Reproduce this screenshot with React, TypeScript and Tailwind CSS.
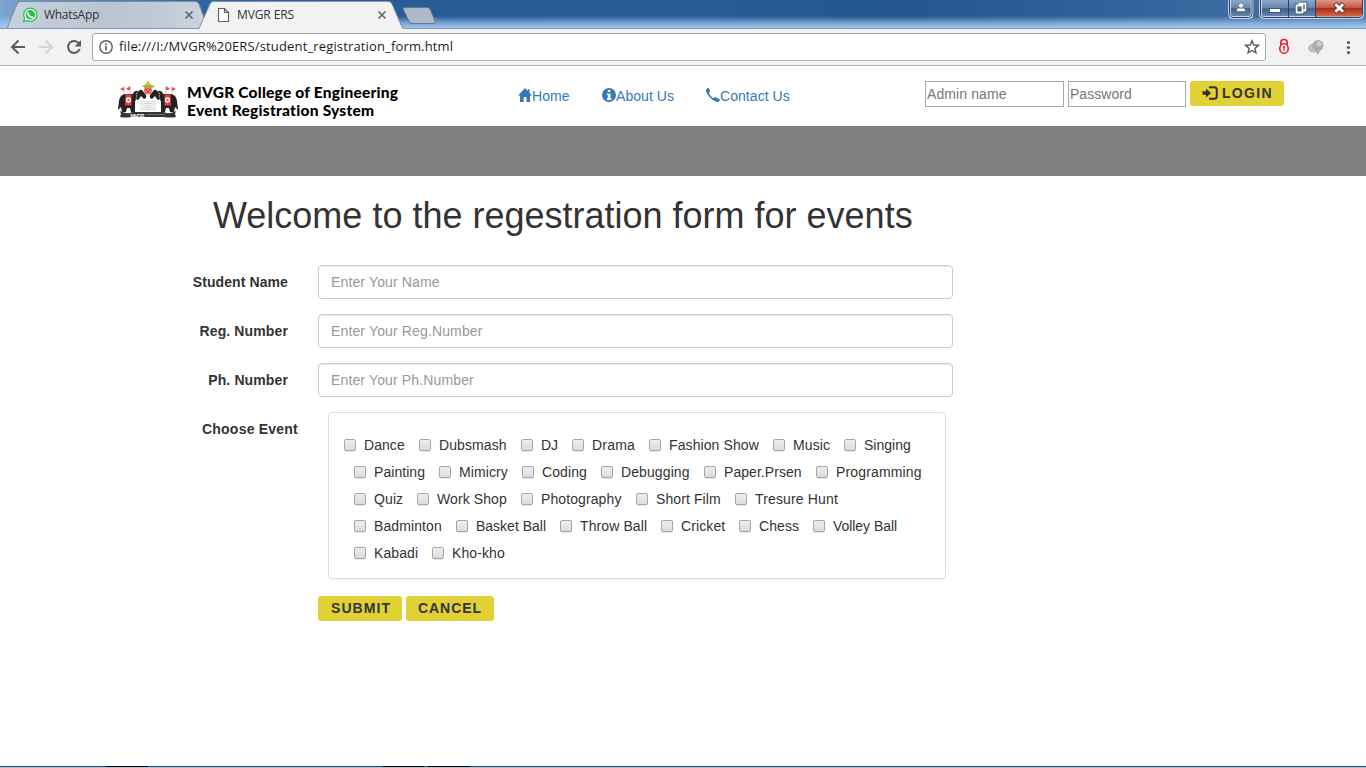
import React from "react";

type Item = [string, string, string];

const rows: Item[][] = [
  [
    ["Dance", "w-[75px]", "tracking-[0.05px]"],
    ["Dubsmash", "w-[102px]", "tracking-[0.1px]"],
    ["DJ", "w-[51px]", "tracking-normal"],
    ["Drama", "w-[77px]", "tracking-[0.2px]"],
    ["Fashion Show", "w-[124px]", "tracking-[0.1px]"],
    ["Music", "w-[71px]", "tracking-[0.1px]"],
    ["Singing", "w-[80px]", "tracking-normal"],
  ],
  [
    ["Painting", "w-[85px]", "tracking-[0.05px]"],
    ["Mimicry", "w-[83px]", "tracking-[0.1px]"],
    ["Coding", "w-[79px]", "tracking-[0.1px]"],
    ["Debugging", "w-[103px]", "tracking-[0.1px]"],
    ["Paper.Prsen", "w-[112px]", "tracking-[0.05px]"],
    ["Programming", "w-[110px]", "tracking-[0.15px]"],
  ],
  [
    ["Quiz", "w-[63px]", "tracking-[0.1px]"],
    ["Work Shop", "w-[104px]", "tracking-[0.1px]"],
    ["Photography", "w-[115px]", "tracking-[0.1px]"],
    ["Short Film", "w-[99px]", "tracking-[0.1px]"],
    ["Tresure Hunt", "w-[110px]", "tracking-[0.15px]"],
  ],
  [
    ["Badminton", "w-[102px]", "tracking-[0.1px]"],
    ["Basket Ball", "w-[104px]", "tracking-normal"],
    ["Throw Ball", "w-[101px]", "tracking-[0.1px]"],
    ["Cricket", "w-[78px]", "tracking-[0.1px]"],
    ["Chess", "w-[74px]", "tracking-[0.1px]"],
    ["Volley Ball", "w-[90px]", "tracking-[-0.05px]"],
  ],
  [
    ["Kabadi", "w-[78px]", "tracking-[0.1px]"],
    ["Kho-kho", "w-[80px]", "tracking-[0.1px]"],
  ],
];

function TabStrip() {
  return (
    <svg className="block h-[29px] w-[1366px] shrink-0" viewBox="0 0 1366 29">
      <defs>
        <linearGradient id="sky" x1="0" x2="1" y1="0" y2="0">
          <stop offset="0" stopColor="#7fa5cd" />
          <stop offset=".02" stopColor="#6f98c5" />
          <stop offset=".15" stopColor="#2f66a3" />
          <stop offset=".32" stopColor="#265b95" />
          <stop offset=".5" stopColor="#275e98" />
          <stop offset=".65" stopColor="#22568d" />
          <stop offset=".85" stopColor="#34659c" />
          <stop offset="1" stopColor="#4a79ac" />
        </linearGradient>
        <linearGradient id="haze" x1="0" x2="0" y1="0" y2="1">
          <stop offset="0" stopColor="#a3c8f0" stopOpacity="0" />
          <stop offset=".55" stopColor="#a3c8f0" stopOpacity="0" />
          <stop offset=".83" stopColor="#a3c8f0" stopOpacity=".75" />
          <stop offset="1" stopColor="#a6cbf0" stopOpacity="1" />
        </linearGradient>
        <linearGradient id="tab" x1="0" x2="1" y1="0" y2="0">
          <stop offset="0" stopColor="#c6d1de" />
          <stop offset=".5" stopColor="#bac4d0" />
          <stop offset=".75" stopColor="#c0c9d4" />
          <stop offset="1" stopColor="#ccd4dd" />
        </linearGradient>
        <linearGradient id="glass" x1="0" x2="0" y1="0" y2="1">
          <stop offset="0" stopColor="#8ba8c8" />
          <stop offset=".45" stopColor="#6587ad" />
          <stop offset=".5" stopColor="#3e5f86" />
          <stop offset="1" stopColor="#6f92b8" />
        </linearGradient>
        <linearGradient id="red" x1="0" x2="0" y1="0" y2="1">
          <stop offset="0" stopColor="#dc9488" />
          <stop offset=".45" stopColor="#c65a47" />
          <stop offset=".5" stopColor="#aa2c14" />
          <stop offset="1" stopColor="#d16a4d" />
        </linearGradient>
      </defs>
      <rect width="1366" height="29" fill="url(#sky)" />
      <rect width="1366" height="29" fill="url(#haze)" />
      <path d="M7 28.5 L17 4 Q18 1.500 20 1.500 H195 Q198 1.500 199 4 L208 28.500Z" fill="url(#tab)" stroke="#7c8da2" />
      <path d="M199 29 L210 4 Q211 1.500 213 1.500 H388 Q391 1.500 392 4 L402 28 L404 29Z" fill="#f2f2f2" />
      <path d="M199 28.500 L210 4 Q211 1.500 213 1.500 H388 Q391 1.500 392 4 L402 27 Q403 28.500 404 28.500" fill="none" stroke="#8094ab" />
      <path d="M0 28.500H199M404 28.500H1366" stroke="#7d9cc0" />
      <path d="M405 7.500H427Q429 7.500 430 9L435 21Q436 23.500 433 23.500H412Q410 23.500 409 21L403 9Q402.500 7.500 405 7.500Z" fill="#aebac8" stroke="#5f7894" />
      <circle cx="30.300" cy="14.800" r="7.300" fill="#2bbd4e" />
      <path d="M22.700 22.300 24.200 17.500 28 21Z" fill="#2bbd4e" />
      <circle cx="30.300" cy="14.800" r="5.400" fill="none" stroke="#fff" strokeWidth="1.200" />
      <path d="m24.500 20.600 1.200-3.300 2.200 2.200Z" fill="#fff" />
      <path d="M28 12.200q-.5 2.300 1.500 4t4 1.100" fill="none" stroke="#fff" strokeWidth="1.800" />
      <path d="m185.500 11.500 7 7m0-7-7 7M378.500 11.500l7 7m0-7-7 7" stroke="#606468" strokeWidth="1.600" />
      <path d="M218.500 8.500h6l4 4v9h-10zM224.500 8.500v4h4" fill="#fff" stroke="#5f6062" strokeWidth="1.200" />
      <path d="M1229.500 0V14q0 3.500 3.500 3.500h15.500q3.500 0 3.500-3.500V0" fill="url(#glass)" stroke="#e3eef9" strokeWidth="2.500" />
      <path d="M1260.500 0V14q0 3.500 3.500 3.500h95q3.500 0 3.500-3.500V0" fill="url(#glass)" stroke="#e3eef9" strokeWidth="2.500" />
      <path d="M1316 0h46v13.500q0 3-3 3h-43z" fill="url(#red)" />
      <path d="M1229.500 0V14q0 3.500 3.500 3.500h15.500q3.500 0 3.500-3.500V0M1260.500 0V14q0 3.500 3.500 3.500h95q3.500 0 3.500-3.500V0M1288.500 0v17M1315.500 0v17" fill="none" stroke="#2c4260" />
      <path d="M1236.500 11.500v-1.500q0-2 2.500-2h4q2.500 0 2.500 2v1.500z" fill="#fff" stroke="#3d526d" strokeWidth=".6" />
      <circle cx="1241" cy="5.500" r="2.500" fill="#fff" stroke="#3d526d" strokeWidth=".6" />
      <rect x="1269.500" y="8.500" width="11" height="4" fill="#fff" stroke="#445872" />
      <path d="M1298.500 3.500h7v7h-2M1296.500 5.500h6v7h-6z" fill="none" stroke="#33475f" strokeWidth="3.400" />
      <path d="M1298.500 3.500h7v7h-2M1296.500 5.500h6v7h-6z" fill="none" stroke="#fff" strokeWidth="1.800" />
      <path d="m1335 3.800 8.500 8.500m0-8.500-8.500 8.500" stroke="#5b3440" strokeWidth="4.800" />
      <path d="m1335.500 4.300 7.500 7.500m0-7.500-7.500 7.500" stroke="#fff" strokeWidth="2.800" />
    </svg>
  );
}

function Emblem() {
  return (
    <svg className="block h-[38px] w-[62px]" viewBox="0 0 62 38">
      <g id="elephant">
        <path d="M2 20Q3 13 9 13H16Q17 9 22 10Q23 8 25 9L29 14Q30 17 27 18L24 15L22 18Q20 20 18 20V31H14L13 27H10L9 31H5L4 26Q2 28 1 29Z" fill="#24211f" />
        <path d="M8.500 13.500h6v11H8Z" fill="#ee3d3d" />
        <circle cx="11.500" cy="19" r="2" fill="#ef6060" stroke="#fff" strokeWidth="1.300" />
        <path d="M7 13V6M13 13V6" stroke="#999" strokeWidth=".6" />
        <path d="M7 6 3 8l4 2ZM13 5 9 8l4 1.500Z" fill="#ee4450" />
        <path d="M21 10q-3 3-1 7" stroke="#aaa" strokeWidth=".8" fill="none" />
        <path d="M19 18q1 4 5 5" stroke="#fff" strokeWidth="1.200" fill="none" />
      </g>
      <use href="#elephant" transform="matrix(-1 0 0 1 62 0)" />
      <circle cx="31" cy="9.500" r="4" fill="#e96c60" />
      <path d="M25 5l3-1 3-4 3 4 4 1-3 2h-7Z" fill="#98b83a" />
      <path d="M28.500 4h5L31 0Z" fill="#efb83c" />
      <path d="M28.500 8.500H30m2 0h1.500m-3.500 2.500h2" stroke="#8e3931" strokeWidth=".8" />
      <path d="m24 20 7 1 7-1v8l-7 1-7-1Z" fill="#f8f8f8" stroke="#c5c5c5" strokeWidth=".7" />
      <path d="M26 22.500h4m-4 2h4m-4 2h4m2-4h4m-4 2h4m-4 2h4M31 21v7" stroke="#c1c1c1" strokeWidth=".6" />
      <path d="M3 30q9 4 12 1h32q4 3 12-1l-1 3 1 3q-7 1-12 0H15Q8 37 3 36l1-3Z" fill="#373433" />
      <text x="13.500" y="36.500" fill="#fff" fontFamily="Liberation Sans" fontSize="5.500" fontWeight="bold" textLength="14">MVGR</text>
      <path d="M29 33.500h19" stroke="#888" strokeWidth=".7" />
    </svg>
  );
}

function Toolbar() {
  return (
    <div className="flex h-[37px] items-center border-b border-[#b6b4b6] bg-[#f2f2f2]">
      <svg className="h-[36px] w-[92px] shrink-0" viewBox="0 29 92 36" fill="none">
        <path d="M25 47H12m6.500-6.500L12 47l6.500 6.500" stroke="#5a5a5a" strokeWidth="2" />
        <path d="M39 47h13m-6.500-6.500L52 47l-6.500 6.500" stroke="#d3d3d3" strokeWidth="2" />
        <path d="M78.800 43.200A6 6 0 1 0 79.700 49" stroke="#5a5a5a" strokeWidth="2" />
        <path d="M81 40v6.500h-6.500z" fill="#5a5a5a" />
      </svg>
      <div className="flex h-7 w-[1174px] shrink-0 items-center rounded-[3px] border border-[#a9a9a9] bg-white">
        <svg className="ml-[5px] h-4 w-4" viewBox="0 0 16 16" fill="none" stroke="#5a5a5a">
          <circle cx="8" cy="8" r="6.200" strokeWidth="1.400" />
          <path d="M8 7v4.500M8 4.300v1.700" strokeWidth="1.600" />
        </svg>
        <span className="ml-[5px] font-['Open_Sans',sans-serif] text-[13px] tracking-[0.15px] whitespace-nowrap text-[#1b1b1b]">file:///I:/MVGR%20ERS/student_registration_form.html</span>
        <svg className="mr-[5px] ml-auto h-4 w-4" viewBox="0 0 16 16" fill="none" stroke="#5a5a5a" strokeWidth="1.400">
          <path d="m8 1.800 1.800 4.200 4.600.4-3.500 3 1.100 4.500L8 11.500l-4 2.400 1.100-4.500-3.500-3 4.600-.4Z" />
        </svg>
      </div>
      <svg className="h-[36px] w-[100px] shrink-0" viewBox="1266 29 100 36">
        <path d="M1280.800 45v-2.500q0-3 3.200-3t3.200 3V45" fill="none" stroke="#ee1525" strokeWidth="1.500" />
        <ellipse cx="1284" cy="48.500" rx="4.200" ry="4.700" fill="#fff" stroke="#ee1525" strokeWidth="1.600" />
        <path d="M1284 46v5M1282.700 47h2.600" stroke="#ee1525" strokeWidth="1.200" />
        <ellipse cx="1313.500" cy="48" rx="5.500" ry="4.500" fill="#bebebe" />
        <path d="m1314 48 4 7 3-7Z" fill="#a5a5a5" />
        <circle cx="1318" cy="45.500" r="5.500" fill="#adadad" />
        <circle cx="1319" cy="44" r="2.500" fill="#cdcdcd" />
        <circle cx="1348.500" cy="42.500" r="1.600" fill="#5a5a5a" />
        <circle cx="1348.500" cy="47.500" r="1.600" fill="#5a5a5a" />
        <circle cx="1348.500" cy="52.500" r="1.600" fill="#5a5a5a" />
      </svg>
    </div>
  );
}

const navIcons = {
  home: "M7 0 0 7.500h2V14h3.700V9h2.800v5H12V7.500h2L11.500 4.800V1.200H9.800v1.800Z",
  info: "M7 0a7 7 0 1 0 0 14A7 7 0 0 0 7 0ZM5.800 2h2.500v2H5.800ZM5 5.500h3.500v4.800h1V12H4.800v-1.700h1V7H5Z",
  phone: "M1.500 0 3 .2l1.200 3.300L2.700 5q1.500 3 4.500 5.200L9 9l4.300 2q.8.500.4 1.500-.8 1.500-2.900 1.500Q7 13 3.500 9T0 2.500Q0 1 1.500 0Z",
};

function NavLink({ icon, label, width }: { icon: string; label: string; width: string }) {
  return (
    <a className={"flex items-center text-[14px] leading-5 text-[#337ab7] " + width}>
      <svg className="-mt-0.5 h-[14px] w-[14px] shrink-0" viewBox="0 0 14 14">
        <path d={icon} fill="currentColor" fillRule="evenodd" />
      </svg>
      <span className="tracking-[0.06px] whitespace-nowrap">{label}</span>
    </a>
  );
}

function Field({ label, hint, spacing }: { label: string; hint: string; spacing: string }) {
  return (
    <div className="mb-[15px] flex h-[34px] items-center">
      <label className={"w-[288px] text-right text-[14px] font-bold whitespace-nowrap " + spacing}>{label}</label>
      <input
        className="ml-[30px] h-[34px] w-[635px] rounded-[4px] border border-[#ccc] bg-white px-3 text-[14px] tracking-[0.14px] shadow-[inset_0_1px_1px_rgba(0,0,0,.075)] placeholder:text-[#999]"
        placeholder={hint}
      />
    </div>
  );
}

export default function App() {
  return (
    <div className="flex h-[768px] w-[1366px] flex-col overflow-hidden bg-white font-['Liberation_Sans',Arial,sans-serif] text-[#333]">
      <div className="relative">
        <TabStrip />
        <span className="absolute top-[7px] left-[44px] font-['Open_Sans',sans-serif] text-[12px] leading-4 tracking-[-0.3px] text-[#333]">WhatsApp</span>
        <span className="absolute top-[7px] left-[237px] font-['Open_Sans',sans-serif] text-[12px] leading-4 tracking-[-0.1px] text-[#333]">MVGR ERS</span>
      </div>
      <Toolbar />
      <header className="flex h-[60px] items-start">
        <div className="mt-[15px] ml-[117px] w-[62px]"><Emblem /></div>
        <div className="mt-[17px] ml-2 w-[331px] font-[Lato,sans-serif] text-[15.500px] leading-[18px] font-black whitespace-nowrap text-black">
          <div className="tracking-[0.22px]">MVGR College of Engineering</div>
          <div className="tracking-[0.25px]">Event Registration System</div>
        </div>
        <nav className="mt-5 flex">
          <NavLink icon={navIcons.home} label="Home" width="w-[84px]" />
          <NavLink icon={navIcons.info} label="About Us" width="w-[104px]" />
          <NavLink icon={navIcons.phone} label="Contact Us" width="w-[219px]" />
        </nav>
        <div className="mt-[15px] flex">
          <input className="h-[26px] w-[139px] border border-[#a9a9a9] px-px text-[14px] tracking-[0.1px] placeholder:text-[#777]" placeholder="Admin name" />
          <input className="ml-1 h-[26px] w-[118px] border border-[#a9a9a9] px-px text-[14px] tracking-[0.03px] placeholder:text-[#777]" placeholder="Password" />
          <button className="ml-1 flex h-[25px] w-[94px] items-center rounded-[3px] bg-[#e1d134] pl-3 text-[14px] font-bold tracking-[1.300px]">
            <svg className="-mt-0.5 mr-1 h-[14px] w-4" viewBox="0 0 16 14">
              <path d="M.5 5.300H4V2.500L9 7l-5 4.500V8.700H.5Z" fill="#333" />
              <path d="M7 1.200h5.200q2.600 0 2.600 2.600v6.400q0 2.600-2.600 2.600H7" fill="none" stroke="#333" strokeWidth="2" />
            </svg>
            LOGIN
          </button>
        </div>
      </header>
      <div className="h-[50px] bg-[#808080]" />
      <main className="flex-1">
        <h1 className="mt-5 ml-[213px] text-[36px] leading-[40px] whitespace-nowrap">Welcome to the regestration form for events</h1>
        <form className="mt-[29px]">
          <Field label="Student Name" hint="Enter Your Name" spacing="tracking-[0.09px]" />
          <Field label="Reg. Number" hint="Enter Your Reg.Number" spacing="tracking-[0.12px]" />
          <Field label="Ph. Number" hint="Enter Your Ph.Number" spacing="tracking-[0.12px]" />
          <div className="flex">
            <div className="w-[298px] pt-[7px] text-right text-[14px] leading-5 font-bold tracking-[0.22px]">Choose Event</div>
            <div className="ml-[30px] h-[167px] w-[618px] rounded-[4px] border border-[#ddd] pt-[18px] shadow-[0_1px_1px_rgba(0,0,0,.05)]">
              {rows.map((row, r) => (
                <div key={r} className={"flex h-[27px] items-center " + (r === 0 ? "pl-[15px]" : "pl-[25px]")}>
                  {row.map(([name, width, spacing]) => (
                    <label key={name} className={"flex shrink-0 items-center text-[14px] leading-5 whitespace-nowrap " + width}>
                      <input type="checkbox" className="mr-2 h-3 w-3 shrink-0 appearance-none rounded-[2px] border border-[#a6a6a6] bg-linear-to-b from-[#eee] to-[#dcdcdc] shadow-[0_1px_0_#e8e8e8]" />
                      <span className={spacing}>{name}</span>
                    </label>
                  ))}
                </div>
              ))}
            </div>
          </div>
          <div className="mt-[17px] ml-[318px] flex gap-1 text-[14px] font-bold">
            <button type="button" className="h-[25px] w-[84px] rounded-[3px] bg-[#e1d134] pl-0.5 tracking-[1.050px]">SUBMIT</button>
            <button type="button" className="h-[25px] w-[88px] rounded-[3px] bg-[#e1d134] tracking-[0.950px]">CANCEL</button>
          </div>
        </form>
      </main>
      <footer className="flex h-[2px] border-t border-[#35485b] bg-[#a9c3dd]">
        <div className="-mt-px ml-[106px] h-px w-[42px] bg-black" />
        <div className="-mt-px ml-[235px] h-px w-[41px] bg-black" />
        <div className="-mt-px ml-[4px] h-px w-[42px] bg-black" />
      </footer>
    </div>
  );
}
